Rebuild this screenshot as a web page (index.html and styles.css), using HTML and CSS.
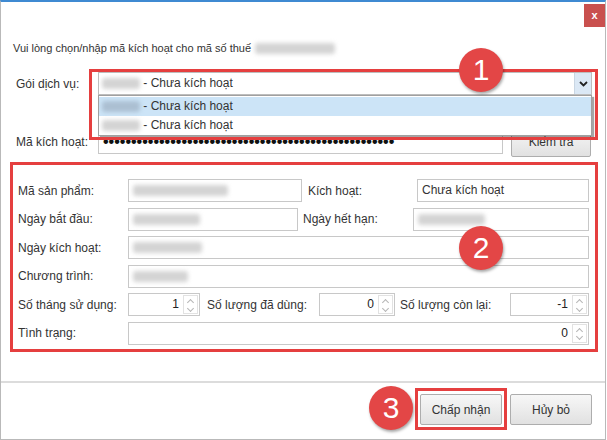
FILE: index.html
```html
<!DOCTYPE html>
<html lang="vi">
<head>
    <meta charset="UTF-8">
    <meta name="viewport" content="width=device-width, initial-scale=1.0">
    <title>Kích hoạt gói dịch vụ</title>
    <link rel="stylesheet" href="styles.css">
</head>
<body>

<div class="dialog">
    <div class="titlebar">
        <button class="close-btn">x</button>
    </div>

    <div class="content">
        <p class="intro">Vui lòng chọn/nhập mã kích hoạt cho mã số thuế <span class="blur blur-tax"></span></p>

        <div class="row row-package">
            <span class="label">Gói dịch vụ:</span>
            <div class="select">
                <div class="select-value"><span class="blur blur-pkg"></span> - Chưa kích hoạt</div>
                <div class="select-arrow">
                    <svg width="9" height="6" viewBox="0 0 9 6"><path d="M1 1 L4.5 4.5 L8 1" fill="none" stroke="#222" stroke-width="1.8"/></svg>
                </div>
                <ul class="dropdown">
                    <li class="selected"><span class="blur blur-pkg blur-blue"></span> - Chưa kích hoạt</li>
                    <li><span class="blur blur-pkg"></span> - Chưa kích hoạt</li>
                </ul>
                <div class="mark mark-1"></div>
                <span class="badge badge-1">1</span>
            </div>
        </div>

        <div class="row row-code">
            <span class="label">Mã kích hoạt:</span>
            <div class="input password">••••••••••••••••••••••••••••••••••••••••••••••••••••</div>
            <button class="btn btn-check">Kiểm tra</button>
        </div>

        <div class="details">
            <div class="drow">
                <span class="dlabel">Mã sản phẩm:</span>
                <div class="input w174"><span class="blur blur-product"></span></div>
                <span class="dlabel dlabel-mid w109">Kích hoạt:</span>
                <div class="input grow">Chưa kích hoạt</div>
            </div>
            <div class="drow">
                <span class="dlabel">Ngày bắt đầu:</span>
                <div class="input w170"><span class="blur blur-date"></span></div>
                <span class="dlabel dlabel-mid2">Ngày hết hạn:</span>
                <div class="input grow"><span class="blur blur-date"></span></div>
            </div>
            <div class="drow">
                <span class="dlabel">Ngày kích hoạt:</span>
                <div class="input grow"><span class="blur blur-date2"></span></div>
            </div>
            <div class="drow">
                <span class="dlabel">Chương trình:</span>
                <div class="input grow"><span class="blur blur-program"></span></div>
            </div>
            <div class="drow">
                <span class="dlabel">Số tháng sử dụng:</span>
                <div class="spinner w72">
                    <span class="num">1</span>
                    <span class="spin"><i class="up"></i><i class="down"></i></span>
                </div>
                <span class="dlabel dlabel-used">Số lượng đã dùng:</span>
                <div class="spinner w76">
                    <span class="num">0</span>
                    <span class="spin"><i class="up"></i><i class="down"></i></span>
                </div>
                <span class="dlabel dlabel-mid2">Số lượng còn lại:</span>
                <div class="spinner grow">
                    <span class="num">-1</span>
                    <span class="spin"><i class="up"></i><i class="down"></i></span>
                </div>
            </div>
            <div class="drow">
                <span class="dlabel">Tình trạng:</span>
                <div class="spinner grow">
                    <span class="num">0</span>
                    <span class="spin"><i class="up"></i><i class="down"></i></span>
                </div>
            </div>
            <span class="badge badge-2">2</span>
        </div>
    </div>

    <div class="footer">
        <div class="ok-wrap">
            <span class="badge badge-3">3</span>
            <button class="btn">Chấp nhận</button>
            <div class="mark mark-3"></div>
        </div>
        <button class="btn">Hủy bỏ</button>
    </div>
</div>

</body>
</html>
```

FILE: styles.css
```css
* {
    margin: 0;
    padding: 0;
    box-sizing: border-box;
}

body {
    font-family: "Liberation Sans", Arial, sans-serif;
    font-size: 12px;
    color: #333;
    background: #fff;
}

.dialog {
    width: 606px;
    height: 440px;
    border: 1px solid #b9b9b9;
    border-top: 2px solid #3f8ad2;
    background: #fff;
}

/* title bar */
.titlebar {
    height: 30px;
    display: flex;
    justify-content: flex-end;
    padding: 2px 0 0 0;
}

.close-btn {
    width: 21px;
    height: 23px;
    border: none;
    background: #c9504e;
    color: #fff;
    font-family: inherit;
    font-size: 11px;
    font-weight: bold;
    line-height: 21px;
}

.intro {
    margin: 9px 0 0 12px;
    font-size: 11px;
    line-height: 14px;
    display: flex;
    align-items: center;
    gap: 4px;
}

/* blurred values */
.blur {
    display: inline-block;
    height: 11px;
    background: #d4d4d4;
    border-radius: 3px;
    filter: blur(2px);
    vertical-align: middle;
}

.blur-tax { width: 80px; }
.blur-pkg { width: 38px; }
.blur-blue { background: #abbfd2; }
.blur-product { width: 95px; }
.blur-date { width: 67px; }
.blur-date2 { width: 69px; }
.blur-program { width: 55px; }

/* top rows */
.row {
    display: flex;
    align-items: center;
    padding-left: 15px;
}

.label {
    width: 82px;
}

.row-package {
    margin-top: 17px;
    height: 23px;
}

.select {
    position: relative;
    width: 494px;
    height: 23px;
    border: 1px solid #bdbdbd;
    display: flex;
}

.select-value {
    flex: 1;
    padding-left: 3px;
    line-height: 21px;
}

.select-arrow {
    width: 17px;
    background: #dbe8f5;
    border-left: 1px solid #c9d6e3;
    display: flex;
    align-items: center;
    justify-content: center;
}

.dropdown {
    position: absolute;
    top: 22px;
    left: -1px;
    width: 494px;
    height: 41px;
    list-style: none;
    background: #fff;
    border: 1px solid #a0a0a0;
    box-shadow: 2px 2px 1px rgba(0, 0, 0, 0.35);
    padding-top: 1px;
    z-index: 5;
}

.dropdown li {
    height: 19px;
    line-height: 19px;
    padding-left: 3px;
}

.dropdown li.selected {
    background: #cce4f7;
}

.row-code {
    margin-top: 32px;
    height: 30px;
}

.input {
    height: 23px;
    border: 1px solid #c8c8c8;
    background: #fff;
    padding: 0 4px;
    line-height: 21px;
    white-space: nowrap;
    overflow: hidden;
}

.password {
    width: 405px;
    font-size: 16px;
    font-weight: bold;
    color: #111;
    line-height: 20px;
}

.btn {
    height: 31px;
    width: 82px;
    border: 1px solid #adadad;
    border-radius: 2px;
    background: linear-gradient(#f7f7f7, #e1e1e1);
    font-family: inherit;
    font-size: 12px;
    color: #333;
}

.btn-check {
    width: 80px;
    height: 30px;
    margin-left: 8px;
}

/* details box */
.details {
    position: relative;
    margin: 5px 0 0 9px;
    width: 588px;
    border: 3px solid #e53f3f;
    padding: 14px 6px 4.5px 5px;
    display: flex;
    flex-direction: column;
    gap: 5.5px;
}

.drow {
    display: flex;
    align-items: center;
    height: 23px;
}

.dlabel {
    width: 110px;
    flex-shrink: 0;
}

.dlabel-mid {
    margin-left: 6px;
}

.dlabel-mid2 {
    margin-left: 5px;
}

.dlabel-used {
    margin-left: 7px;
    width: 112px;
}

.w72 { width: 72px; }
.w76 { width: 76px; }
.w109 { width: 109px; }
.w170 { width: 170px; }
.w174 { width: 174px; }
.grow { flex: 1; }

.spinner {
    height: 23px;
    border: 1px solid #c8c8c8;
    display: flex;
}

.spinner .num {
    flex: 1;
    text-align: right;
    padding-right: 4px;
    line-height: 21px;
    color: #222;
}

.spin {
    width: 15px;
    margin: 1px 1px 1px 0;
    border: 1px solid #e2e2e2;
    display: flex;
    flex-direction: column;
}

.spin i {
    flex: 1;
    position: relative;
}

.spin i::after {
    content: "";
    position: absolute;
    left: 4px;
    width: 4px;
    height: 4px;
    border-left: 1px solid #b5b5b5;
    border-top: 1px solid #b5b5b5;
}

.spin .up::after {
    top: 4px;
    transform: rotate(45deg);
}

.spin .down::after {
    top: 1px;
    transform: rotate(-135deg);
}

/* footer */
.footer {
    margin-top: 29px;
    border-top: 2px solid #dcdcdc;
    padding: 11px 13px 0 0;
    display: flex;
    justify-content: flex-end;
    gap: 8px;
}

.ok-wrap {
    position: relative;
}

/* annotation marks */
.mark {
    position: absolute;
    border: 3px solid #e53f3f;
    z-index: 6;
}

.mark-1 {
    left: -10px;
    top: -4px;
    width: 509px;
    height: 71px;
}

.mark-3 {
    left: -5px;
    top: -6px;
    width: 92px;
    height: 42px;
}

.badge {
    position: absolute;
    width: 44px;
    height: 44px;
    border-radius: 50%;
    background: #e34646;
    color: #fff;
    font-size: 30px;
    line-height: 44px;
    text-align: center;
    box-shadow: 1px 2px 3px rgba(0, 0, 0, 0.35);
    z-index: 7;
}

.badge-1 {
    left: 360px;
    top: -25px;
}

.badge-2 {
    left: 446px;
    top: 61px;
}

.badge-3 {
    left: -51px;
    top: -8px;
}
```
